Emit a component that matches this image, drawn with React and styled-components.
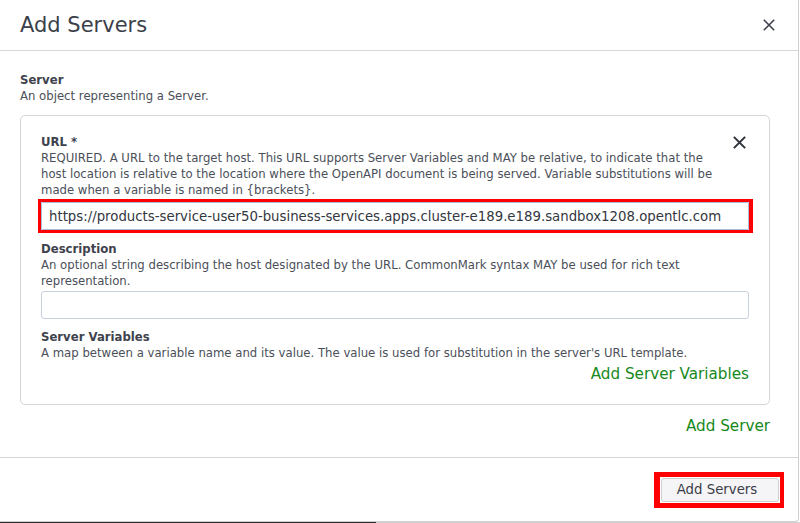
import React from "react";
import styled, { createGlobalStyle } from "styled-components";

const GlobalStyle = createGlobalStyle`
  html, body { margin: 0; padding: 0; background: #ffffff; }
  body { font-family: "DejaVu Sans", "Liberation Sans", sans-serif; }
  * { box-sizing: border-box; }
`;

const Page = styled.div`
  width: 800px;
  height: 523px;
  overflow: hidden;
  display: flex;
  flex-direction: column;
`;

const Modal = styled.div`
  width: 799px;
  height: 522px;
  background: #fff;
  border-right: 1px solid #cfcfcf;
  border-bottom: 1px solid #cfcfcf;
  border-bottom-right-radius: 4px;
  display: flex;
  flex-direction: column;
`;

const Header = styled.div`
  height: 51px;
  flex: none;
  display: flex;
  align-items: center;
  justify-content: space-between;
  padding: 0 23px 0 20px;
  border-bottom: 1px solid #d6d6d6;
`;

const Title = styled.h2`
  margin: 0;
  font-size: 21px;
  font-weight: normal;
  color: #3b3f49;
`;

const IconButton = styled.button`
  border: 0;
  background: transparent;
  padding: 0;
  display: flex;
  align-items: center;
  justify-content: center;
  width: ${(p) => p.$size}px;
  height: ${(p) => p.$size}px;
  color: ${(p) => p.$color};
  cursor: pointer;
`;

const Body = styled.div`
  flex: 1;
  display: flex;
  flex-direction: column;
  padding: 21px 28px 0 20px;
`;

const Label = styled.div`
  font-size: 11.7px;
  line-height: 16px;
  font-weight: bold;
  color: #3e424c;
`;

const Help = styled.div`
  font-size: 11.7px;
  line-height: 16px;
  color: #4b4f59;
  max-width: ${(p) => (p.$narrow ? "684px" : "none")};
`;

const Card = styled.div`
  margin-top: 11px;
  border: 1px solid #d6d6d6;
  border-radius: 5px;
  padding: 18px 20px 21px 20px;
  display: flex;
  flex-direction: column;
`;

const LabelRow = styled.div`
  display: flex;
  align-items: center;
  justify-content: space-between;
  height: 16px;
  padding-right: 3px;
`;

const Field = styled.div`
  display: flex;
  flex-direction: column;
  margin-top: ${(p) => p.$gap || 0}px;
`;

const Highlight = styled.div`
  margin: ${(p) => p.$gap}px -4px 0 -3px;
  border-style: solid;
  border-color: #ff0000;
  border-width: 3px 4px 3px 3px;
`;

const TextInput = styled.input`
  display: block;
  width: 100%;
  height: 28px;
  margin-top: ${(p) => p.$gap || 0}px;
  padding: 0 7px;
  border: 1px solid ${(p) => (p.$focused ? "#a9bedd" : "#c9d1e0")};
  border-radius: ${(p) => (p.$focused ? "1px" : "3px")};
  font-family: "DejaVu Sans", "Liberation Sans", sans-serif;
  font-size: 13.3px;
  color: #333740;
  background: #fff;
  outline: none;
`;

const LinkButton = styled.button`
  align-self: flex-end;
  border: 0;
  background: transparent;
  padding: 0;
  margin-top: ${(p) => p.$gap}px;
  font-family: "DejaVu Sans", "Liberation Sans", sans-serif;
  font-size: 15.2px;
  line-height: 18px;
  color: #16891a;
  cursor: pointer;
`;

const Footer = styled.div`
  height: 64px;
  flex: none;
  display: flex;
  align-items: center;
  justify-content: flex-end;
  padding: 0 14px 0 20px;
  border-top: 1px solid #d6d6d6;
`;

const ButtonFrame = styled.div`
  display: flex;
  padding: 1px;
  border: 5px solid #ff0000;
  border-left-width: 6px;
  border-right-width: 4px;
`;

const PrimaryButton = styled.button`
  width: 118px;
  height: 24px;
  padding: 0 6px 0 0;
  border: 1px solid #cdcdd2;
  border-radius: 3px;
  background: #f5f5f7;
  font-family: "DejaVu Sans", "Liberation Sans", sans-serif;
  font-size: 13.3px;
  color: #3a3d45;
  cursor: pointer;
`;

const BehindStrip = styled.div`
  height: 1px;
  display: flex;
`;

const BehindPart = styled.div`
  width: ${(p) => p.$w};
  flex: ${(p) => (p.$w === "auto" ? 1 : "none")};
  background: ${(p) => p.$bg};
`;

const CloseGlyph = ({ size, stroke }) => (
  <svg width={size} height={size} viewBox="0 0 12 12" fill="none">
    <path d="M0.8 0.8 L11.2 11.2 M11.2 0.8 L0.8 11.2" stroke="currentColor" strokeWidth={stroke} strokeLinecap="butt" />
  </svg>
);

export default function App() {
  return (
    <>
      <GlobalStyle />
      <Page>
        <Modal>
          <Header>
            <Title>Add Servers</Title>
            <IconButton $size={12} $color="#3c404a" aria-label="Close">
              <CloseGlyph size={12} stroke={1.6} />
            </IconButton>
          </Header>
          <Body>
            <Label>Server</Label>
            <Help>An object representing a Server.</Help>
            <Card>
              <LabelRow>
                <Label>URL *</Label>
                <IconButton $size={13} $color="#30343d" aria-label="Remove">
                  <CloseGlyph size={13} stroke={1.9} />
                </IconButton>
              </LabelRow>
              <Help $narrow>
                REQUIRED. A URL to the target host. This URL supports Server Variables and MAY be relative, to indicate that the host location is relative to the location where the OpenAPI document is being served. Variable substitutions will be made when a variable is named in {"{brackets}"}.
              </Help>
              <Highlight $gap={1}>
                <TextInput
                  $focused
                  readOnly
                  value="https://products-service-user50-business-services.apps.cluster-e189.e189.sandbox1208.opentlc.com"
                />
              </Highlight>
              <Field $gap={8}>
                <Label>Description</Label>
                <Help $narrow>
                  An optional string describing the host designated by the URL. CommonMark syntax MAY be used for rich text representation.
                </Help>
                <TextInput $gap={2} readOnly value="" />
              </Field>
              <Field $gap={10}>
                <Label>Server Variables</Label>
                <Help $narrow>
                  A map between a variable name and its value. The value is used for substitution in the server's URL template.
                </Help>
                <LinkButton $gap={4}>Add Server Variables</LinkButton>
              </Field>
            </Card>
            <LinkButton $gap={12}>Add Server</LinkButton>
          </Body>
          <Footer>
            <ButtonFrame>
              <PrimaryButton>Add Servers</PrimaryButton>
            </ButtonFrame>
          </Footer>
        </Modal>
        <BehindStrip>
          <BehindPart $w="376px" $bg="#2a2a2a" />
          <BehindPart $w="auto" $bg="#d0d0d0" />
        </BehindStrip>
      </Page>
    </>
  );
}
